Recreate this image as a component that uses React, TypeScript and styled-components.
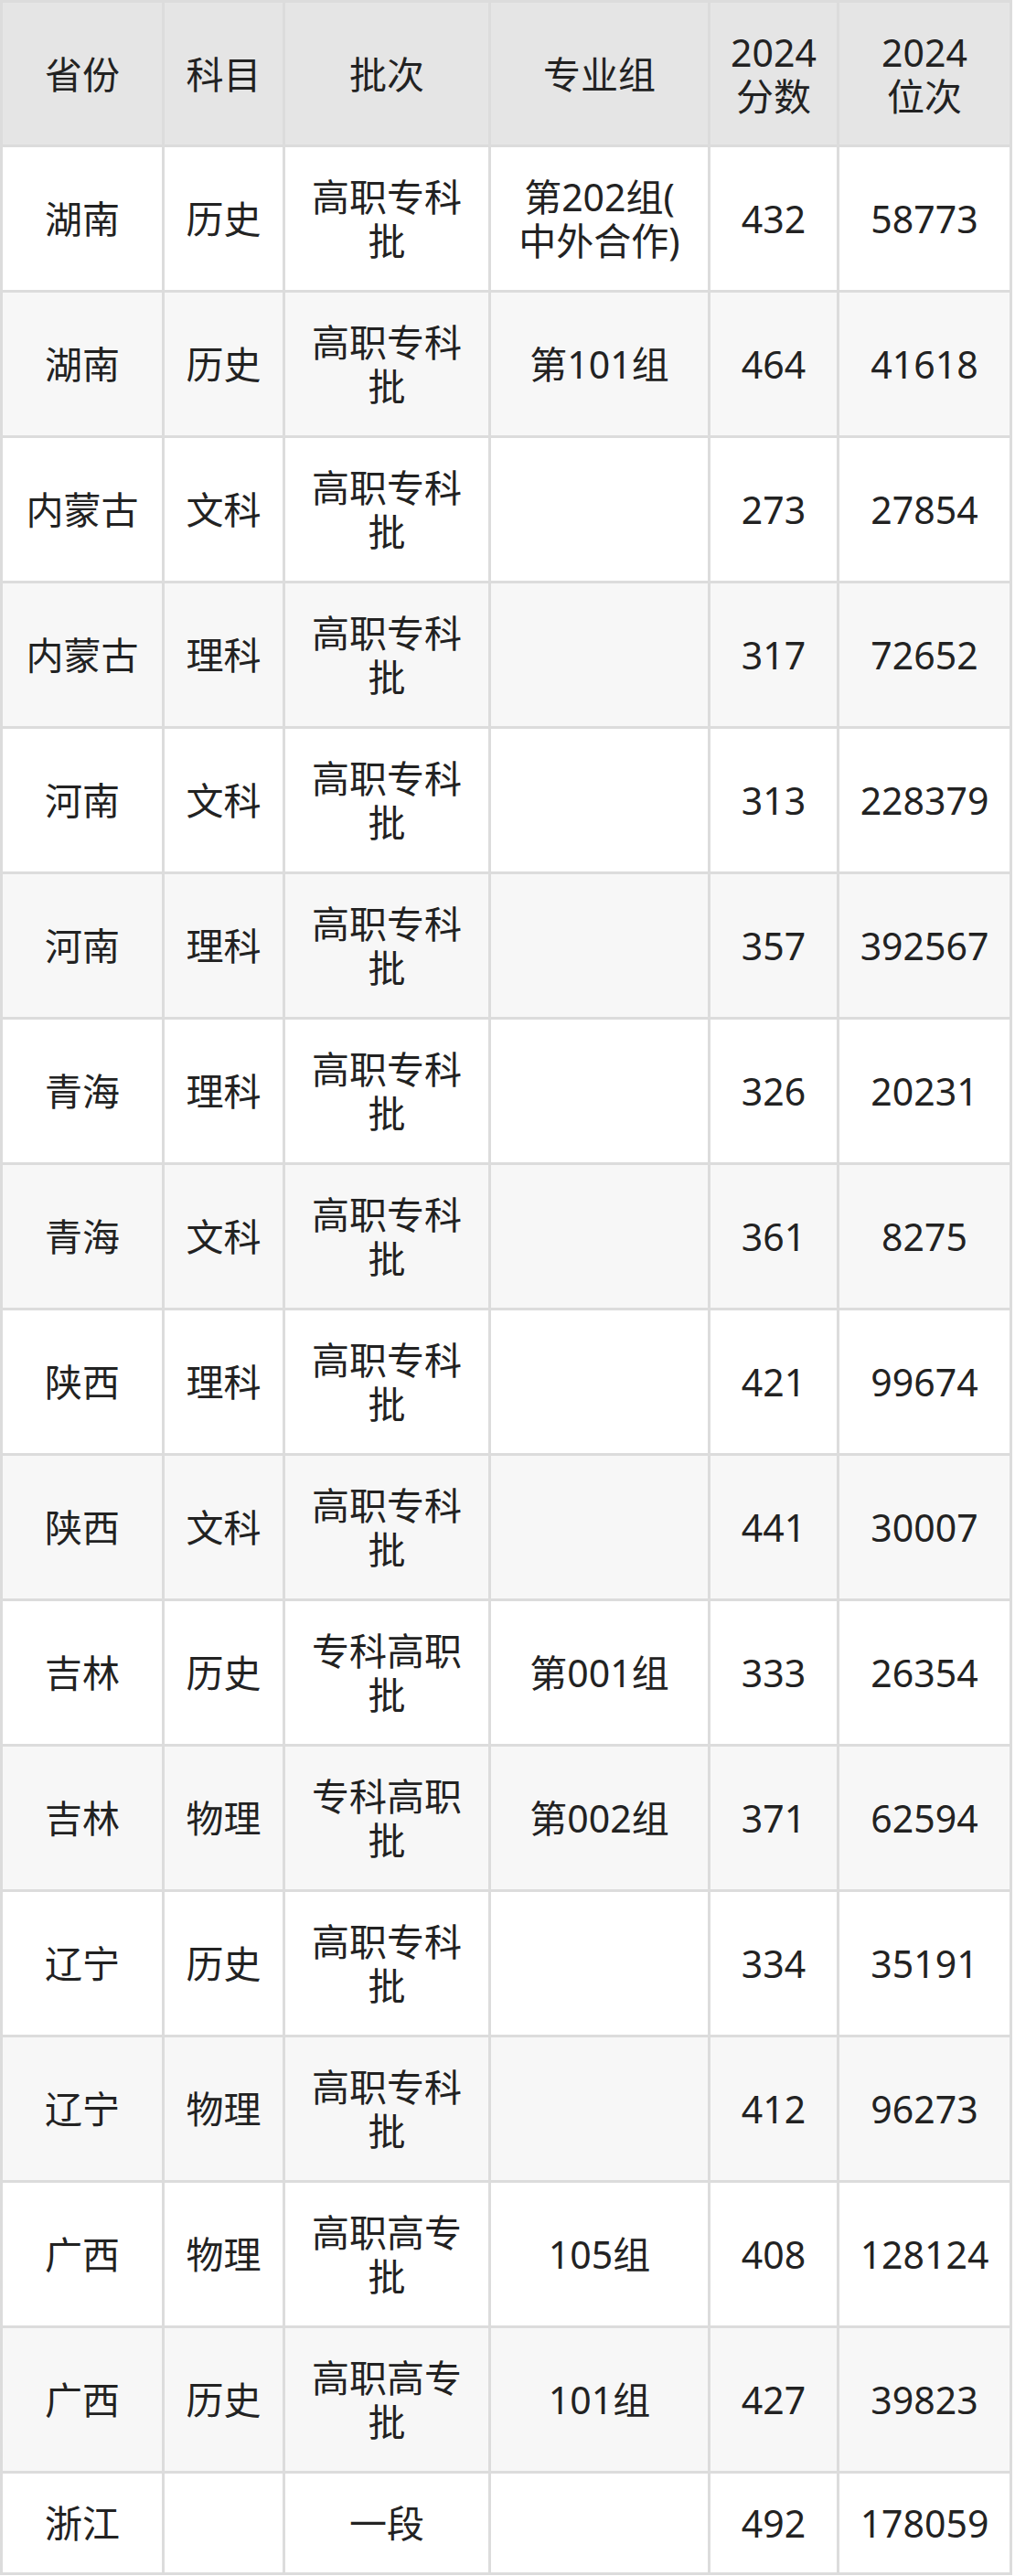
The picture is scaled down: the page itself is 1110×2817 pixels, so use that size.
import React from "react";
import styled, { createGlobalStyle } from "styled-components";

const Global = createGlobalStyle`
  html, body {
    margin: 0;
    padding: 0;
    background: #ffffff;
  }
  body {
    font-family: "Noto Sans", "Noto Sans CJK SC", sans-serif;
  }
`;

const Page = styled.div`
  width: 1110px;
  background: #ffffff;
`;

const Grid = styled.div`
  display: grid;
  grid-template-columns: 174px 129px 222px 237px 138px 186px;
  grid-template-rows: 155px repeat(16, 156px) 108px;
  gap: 3px;
  padding: 3px;
  width: fit-content;
  background: #dcdcdc;
`;

const Cell = styled.div<{ $kind: "head" | "odd" | "even" }>`
  display: flex;
  align-items: center;
  justify-content: center;
  text-align: center;
  white-space: pre-line;
  padding: 0 6px;
  font-family: "Noto Sans", "Noto Sans CJK SC", sans-serif;
  font-size: 41px;
  line-height: 48px;
  font-weight: 400;
  color: #222222;
  background: ${(p) =>
    p.$kind === "head" ? "#e5e5e5" : p.$kind === "even" ? "#f7f7f7" : "#ffffff"};
`;

const headers = ["省份", "科目", "批次", "专业组", "2024\n分数", "2024\n位次"];

const rows: string[][] = [
  ["湖南", "历史", "高职专科\n批", "第202组(\n中外合作)", "432", "58773"],
  ["湖南", "历史", "高职专科\n批", "第101组", "464", "41618"],
  ["内蒙古", "文科", "高职专科\n批", "", "273", "27854"],
  ["内蒙古", "理科", "高职专科\n批", "", "317", "72652"],
  ["河南", "文科", "高职专科\n批", "", "313", "228379"],
  ["河南", "理科", "高职专科\n批", "", "357", "392567"],
  ["青海", "理科", "高职专科\n批", "", "326", "20231"],
  ["青海", "文科", "高职专科\n批", "", "361", "8275"],
  ["陕西", "理科", "高职专科\n批", "", "421", "99674"],
  ["陕西", "文科", "高职专科\n批", "", "441", "30007"],
  ["吉林", "历史", "专科高职\n批", "第001组", "333", "26354"],
  ["吉林", "物理", "专科高职\n批", "第002组", "371", "62594"],
  ["辽宁", "历史", "高职专科\n批", "", "334", "35191"],
  ["辽宁", "物理", "高职专科\n批", "", "412", "96273"],
  ["广西", "物理", "高职高专\n批", "105组", "408", "128124"],
  ["广西", "历史", "高职高专\n批", "101组", "427", "39823"],
  ["浙江", "", "一段", "", "492", "178059"],
];

export default function App() {
  return (
    <Page>
      <Global />
      <Grid>
        {headers.map((h, i) => (
          <Cell key={`h${i}`} $kind="head">
            {h}
          </Cell>
        ))}
        {rows.map((r, ri) =>
          r.map((c, ci) => (
            <Cell key={`${ri}-${ci}`} $kind={ri % 2 === 0 ? "odd" : "even"}>
              {c}
            </Cell>
          ))
        )}
      </Grid>
    </Page>
  );
}
